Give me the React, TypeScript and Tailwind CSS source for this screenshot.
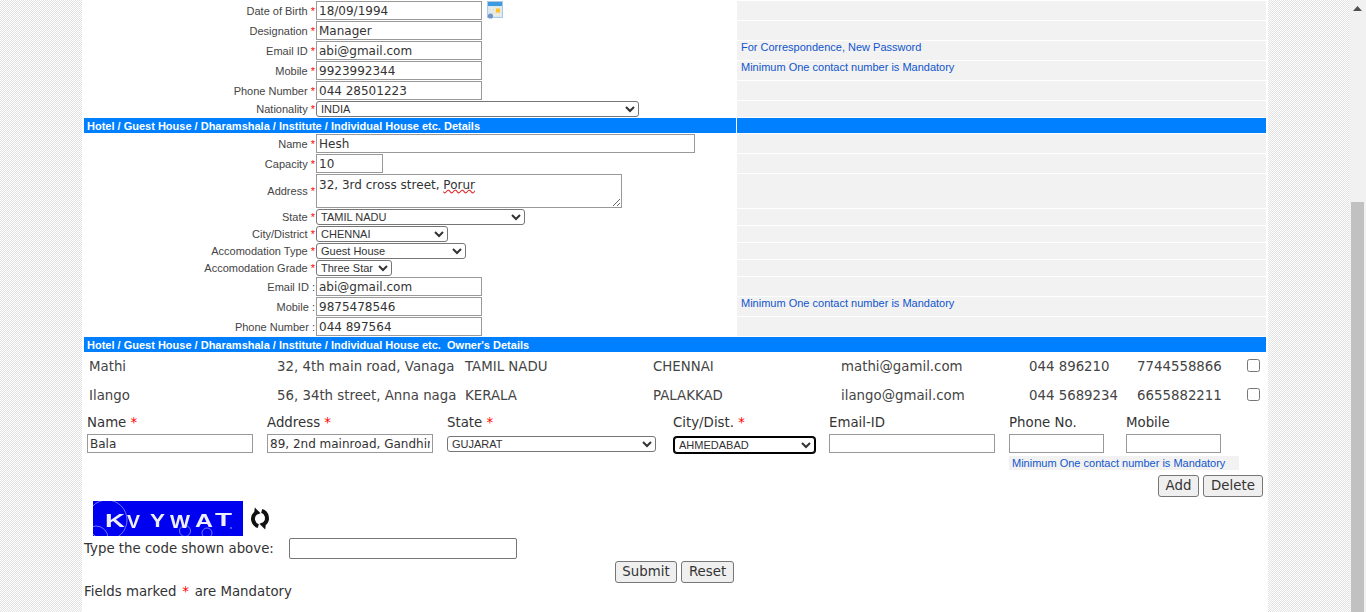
const inputClass =
  "h-[19px] border border-[#999] bg-white px-[2px] font-['DejaVu_Sans',sans-serif] text-[12px] text-[#333] outline-none";
const selectClass =
  "h-[16px] rounded-[3px] border border-[#767676] bg-white font-['Liberation_Sans',sans-serif] text-[11px] text-[#333] outline-none";
const buttonClass =
  'h-[22px] rounded-[3px] border border-[#767676] bg-[#efefef] text-[13.33px] leading-none text-[#333]';
const noteClass = "font-['Liberation_Sans',sans-serif] text-[11px] leading-[12px] text-[#1155cc]";
const checker = 'bg-[repeating-conic-gradient(#e2e2e2_0_25%,#fff_0_50%)] bg-[length:2px_2px]';

function Star() {
  return <span className="text-[#ff0000]">*</span>;
}

function Row({
  label,
  optional,
  height,
  note,
  children,
}: {
  label: string;
  optional?: boolean;
  height: string;
  note?: string;
  children: React.ReactNode;
}) {
  const nudge = height === 'h-[19px]' ? 'pt-px' : '';
  return (
    <div className={`flex gap-px ${height}`}>
      <div className="flex w-[652px]">
        <div
          className={`flex w-[232px] items-center justify-end whitespace-pre pr-px font-['Liberation_Sans',sans-serif] text-[11px] text-[#444] ${nudge}`}
        >
          {label} {optional ? ':' : <Star />}
        </div>
        <div className="flex items-start gap-[5px]">{children}</div>
      </div>
      <div className={`w-[529px] bg-[#f2f2f2] pl-1 ${noteClass}`}>{note}</div>
    </div>
  );
}

function Band({ title, split }: { title: string; split?: boolean }) {
  return (
    <div className={`flex h-[15px] bg-[#0080ff] ${split ? 'gap-px bg-white' : ''}`}>
      <div className="flex w-[652px] items-center bg-[#0080ff] pt-px pl-[3px] font-['Liberation_Sans',sans-serif] text-[11px] font-bold whitespace-pre text-white">
        {title}
      </div>
      <div className="w-[529px] bg-[#0080ff]" />
    </div>
  );
}

function CalendarIcon() {
  return (
    <svg width="16" height="18" viewBox="0 0 16 18">
      <rect x="0.5" y="0.5" width="15" height="16" fill="#d6e8f6" stroke="#a9cbe6" />
      <rect x="1" y="1" width="14" height="4" fill="#3f9be0" />
      <rect x="3" y="6" width="11" height="9" fill="#f1efe0" />
      <path d="M6 6v9M9 6v9M12 6v9M3 9h11M3 12h11" stroke="#d5dde0" strokeWidth="0.6" />
      <rect x="9" y="7.5" width="4" height="4" fill="#ffc030" />
      <circle cx="3.5" cy="15" r="2.6" fill="#7094c8" />
    </svg>
  );
}

function RefreshIcon() {
  return (
    <svg width="22" height="23" viewBox="0 0 19 20">
      <g fill="#111">
        <path d="M8 16.6A6.6 6.6 0 0 1 5.6 5.4" fill="none" stroke="#111" strokeWidth="3.4" />
        <path d="M5 0.5 10 5.5 4 7.8Z" />
      </g>
      <g fill="#111" transform="rotate(180 9.5 10)">
        <path d="M8 16.6A6.6 6.6 0 0 1 5.6 5.4" fill="none" stroke="#111" strokeWidth="3.4" />
        <path d="M5 0.5 10 5.5 4 7.8Z" />
      </g>
    </svg>
  );
}

// stretched captcha letters, x/width read off the reference
const captchaLetters = [
  { ch: 'K', x: 12, w: 20, y: 26 },
  { ch: 'V', x: 34, w: 13, y: 27 },
  { ch: 'Y', x: 57, w: 15, y: 26 },
  { ch: 'W', x: 77, w: 20, y: 27 },
  { ch: 'A', x: 102, w: 18, y: 26 },
  { ch: 'T', x: 122, w: 17, y: 25 },
];

function Captcha() {
  return (
    <svg width="150" height="35" viewBox="0 0 150 35" className="bg-[#0000f0]">
      <circle cx="14" cy="19" r="20" fill="none" stroke="#8080ff" strokeWidth="0.9" />
      <circle cx="3" cy="37" r="12" fill="none" stroke="#8080ff" strokeWidth="0.9" />
      <circle cx="92" cy="30" r="5.5" fill="none" stroke="#8080ff" strokeWidth="0.9" />
      <circle cx="114" cy="32" r="5" fill="none" stroke="#8080ff" strokeWidth="0.9" />
      <circle cx="138" cy="27" r="0.8" fill="#c0c0ff" />
      <g className="font-['Liberation_Sans',sans-serif] text-[19px] font-bold blur-[0.4px]" fill="#eeeeff">
        {captchaLetters.map((l) => (
          <text key={l.ch} x={l.x} y={l.y} textLength={l.w} lengthAdjust="spacingAndGlyphs">
            {l.ch}
          </text>
        ))}
      </g>
    </svg>
  );
}

const owners = [
  ['Mathi', '32, 4th main road, Vanaga', 'TAMIL NADU', 'CHENNAI', 'mathi@gamil.com', '044 896210', '7744558866'],
  ['Ilango', '56, 34th street, Anna naga', 'KERALA', 'PALAKKAD', 'ilango@gmail.com', '044 5689234', '6655882211'],
];

export default function App() {
  return (
    <div className="flex h-[612px] overflow-hidden bg-white font-['DejaVu_Sans',sans-serif] text-[13.33px] text-[#333]">
      <div className={`w-[82px] ${checker}`} />

      <main className="flex w-[1186px] flex-col bg-white px-[2px] pt-px">
        <div className="flex flex-col gap-px">
          <Row label="Date of Birth" height="h-[19px]">
            <input className={`${inputClass} w-[166px]`} defaultValue="18/09/1994" />
            <CalendarIcon />
          </Row>
          <Row label="Designation" height="h-[19px]">
            <input className={`${inputClass} w-[166px]`} defaultValue="Manager" />
          </Row>
          <Row label="Email ID" height="h-[19px]" note="For Correspondence, New Password">
            <input className={`${inputClass} w-[166px]`} defaultValue="abi@gmail.com" />
          </Row>
          <Row label="Mobile" height="h-[19px]" note="Minimum One contact number is Mandatory">
            <input className={`${inputClass} w-[166px]`} defaultValue="9923992344" />
          </Row>
          <Row label="Phone Number" height="h-[19px]">
            <input className={`${inputClass} w-[166px]`} defaultValue="044 28501223" />
          </Row>
          <Row label="Nationality" height="h-[16px]">
            <select className={`${selectClass} w-[323px]`}>
              <option>INDIA</option>
            </select>
          </Row>
          <Band split title="Hotel / Guest House / Dharamshala / Institute / Individual House etc. Details" />
          <Row label="Name" height="h-[19px]">
            <input className={`${inputClass} w-[379px]`} defaultValue="Hesh" />
          </Row>
          <Row label="Capacity" height="h-[19px]">
            <input className={`${inputClass} w-[67px]`} defaultValue="10" />
          </Row>
          <Row label="Address" height="h-[34px]">
            <div className="relative">
              <textarea
                className={`${inputClass} block h-[34px] w-[306px] pt-px`}
                defaultValue="32, 3rd cross street, Porur"
                spellCheck={false}
              />
              <span className="pointer-events-none absolute top-px left-[3px] whitespace-pre text-[12px] text-transparent">
                32, 3rd cross street, <span className="underline decoration-[#e03030] decoration-wavy">Porur</span>
              </span>
            </div>
          </Row>
          <Row label="State" height="h-[16px]">
            <select className={`${selectClass} w-[209px]`}>
              <option>TAMIL NADU</option>
            </select>
          </Row>
          <Row label="City/District" height="h-[16px]">
            <select className={`${selectClass} w-[132px]`}>
              <option>CHENNAI</option>
            </select>
          </Row>
          <Row label="Accomodation Type" height="h-[16px]">
            <select className={`${selectClass} w-[150px]`}>
              <option>Guest House</option>
            </select>
          </Row>
          <Row label="Accomodation Grade" height="h-[16px]">
            <select className={`${selectClass} w-[76px]`}>
              <option>Three Star</option>
            </select>
          </Row>
          <Row label="Email ID" optional height="h-[19px]">
            <input className={`${inputClass} w-[166px]`} defaultValue="abi@gmail.com" />
          </Row>
          <Row label="Mobile" optional height="h-[19px]" note="Minimum One contact number is Mandatory">
            <input className={`${inputClass} w-[166px]`} defaultValue="9875478546" />
          </Row>
          <Row label="Phone Number" optional height="h-[19px]">
            <input className={`${inputClass} w-[166px]`} defaultValue="044 897564" />
          </Row>
          <Band title="Hotel / Guest House / Dharamshala / Institute / Individual House etc.  Owner's Details" />
        </div>

        {owners.map((owner) => (
          <div
            key={owner[0]}
            className="grid h-[29px] grid-cols-[188px_188px_188px_188px_188px_108px_110px_1fr] items-center pl-[5px] text-[#444]"
          >
            {owner.map((cell) => (
              <div key={cell} className="whitespace-pre pt-px">
                {cell}
              </div>
            ))}
            <input type="checkbox" className="h-[13px] w-[13px] -translate-y-px" />
          </div>
        ))}

        <div className="grid grid-cols-[180px_180px_226px_156px_180px_117px_1fr] pl-[3px]">
          <div className="h-[24px] pt-[3px]">
            Name <Star />
          </div>
          <div className="pt-[3px]">
            Address <Star />
          </div>
          <div className="pt-[3px]">
            State <Star />
          </div>
          <div className="pt-[3px]">
            City/Dist. <Star />
          </div>
          <div className="pt-[3px]">Email-ID</div>
          <div className="pt-[3px]">Phone No.</div>
          <div className="pt-[3px]">Mobile</div>

          <input className={`${inputClass} w-[166px]`} defaultValue="Bala" />
          <input className={`${inputClass} w-[166px]`} defaultValue="89, 2nd mainroad, Gandhinagar" />
          <select className={`${selectClass} mt-[2px] w-[209px]`}>
            <option>GUJARAT</option>
          </select>
          <select className={`${selectClass} mt-[3px] ml-px h-[14px] w-[141px] border-black ring-1 ring-black`}>
            <option>AHMEDABAD</option>
          </select>
          <input className={`${inputClass} w-[166px]`} />
          <input className={`${inputClass} w-[95px]`} />
          <input className={`${inputClass} w-[95px]`} />
        </div>

        <div className="mt-[3px] ml-[925px] flex h-[14px] w-[230px] items-center bg-[#f2f2f2] pl-[3px] font-['Liberation_Sans',sans-serif] text-[11px] text-[#1155cc]">
          Minimum One contact number is Mandatory
        </div>

        <div className="mt-[5px] flex justify-end gap-[4px] pr-[3px]">
          <button className={`${buttonClass} w-[41px]`}>Add</button>
          <button className={`${buttonClass} w-[60px]`}>Delete</button>
        </div>

        <div className="mt-[4px] flex h-[35px] items-start gap-[6px] pl-[9px]">
          <Captcha />
          <div className="mt-[6px]">
            <RefreshIcon />
          </div>
        </div>

        <div className="mt-[2px] flex items-center">
          <span className="w-[205px]">Type the code shown above:</span>
          <input className="h-[21px] w-[228px] rounded-[2px] border border-[#767676] bg-white" />
        </div>

        <div className="mt-[2px] ml-[531px] flex gap-[4px]">
          <button className={`${buttonClass} w-[62px]`}>Submit</button>
          <button className={`${buttonClass} w-[53px]`}>Reset</button>
        </div>

        <div className="h-[17px] pt-px leading-[16px]">
          Fields marked <span className="mx-[1.5px] text-[#ff0000]">*</span> are Mandatory
        </div>
      </main>

      <div className={`w-[81px] ${checker}`} />

      <div className="flex w-[17px] flex-col items-center justify-between bg-[#f1f1f1] pt-[6px]">
        <svg width="9" height="5" viewBox="0 0 9 5">
          <path d="M4.5 0 9 5H0Z" fill="#505050" />
        </svg>
        <div className="h-[410px] w-[13px] bg-[#c1c1c1]" />
      </div>
    </div>
  );
}
